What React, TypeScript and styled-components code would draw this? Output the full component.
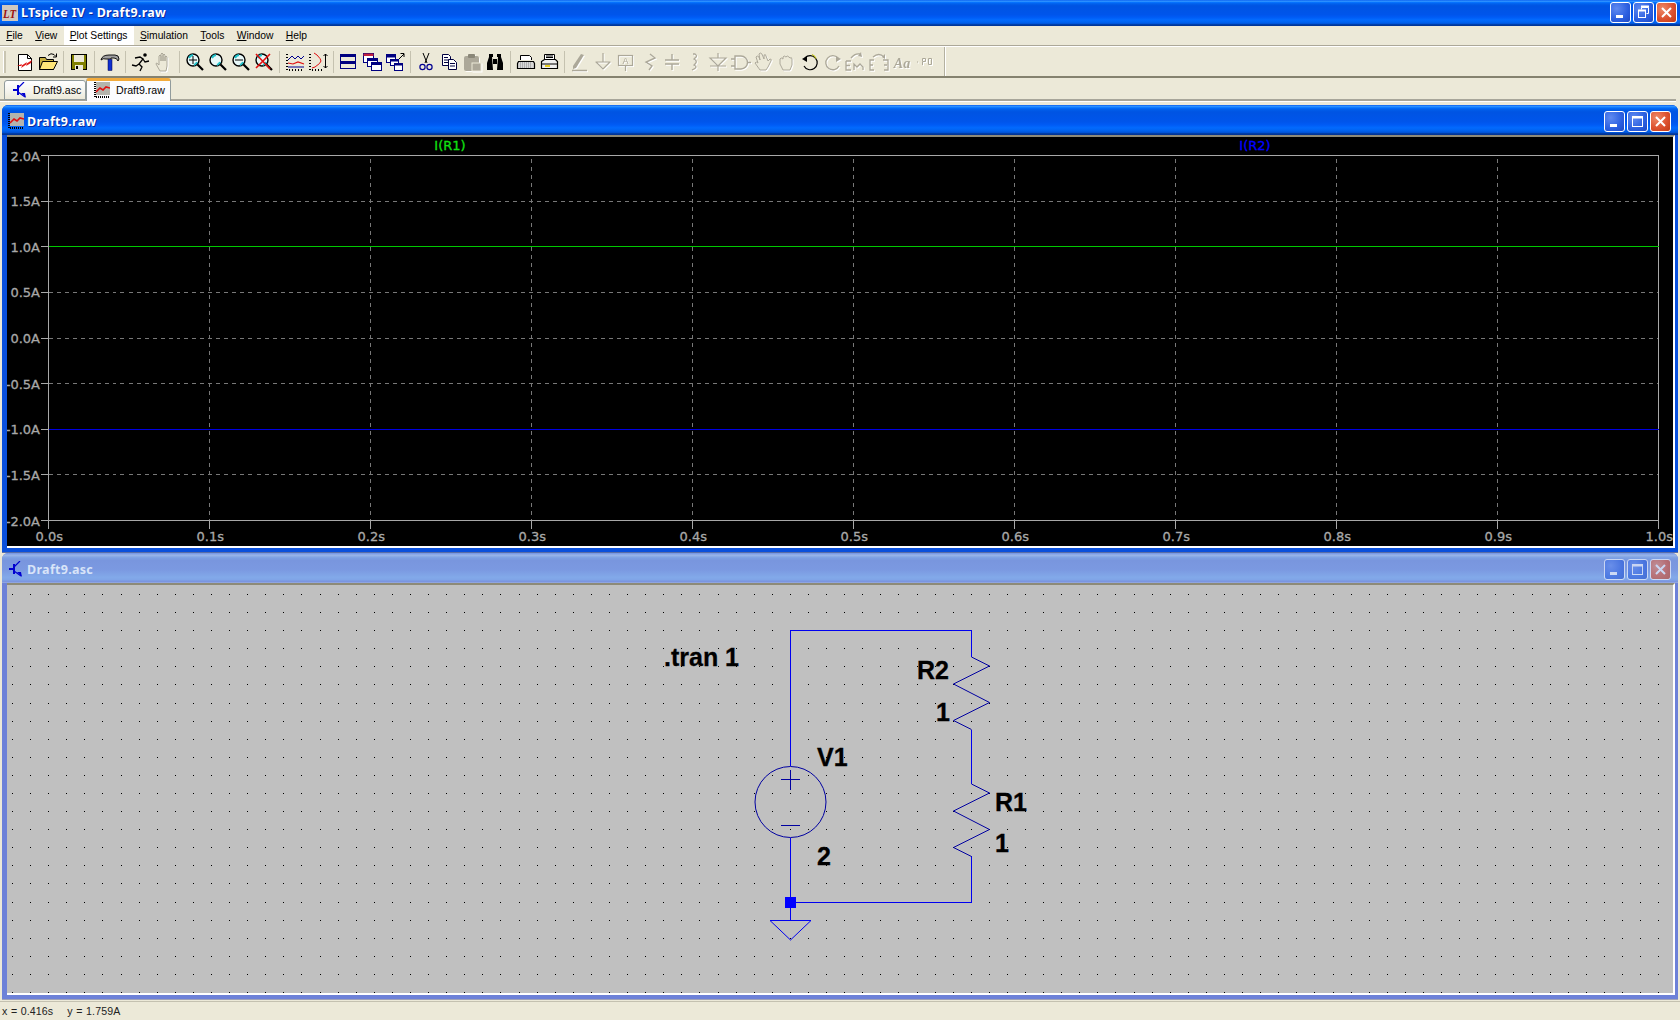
import React from "react";
import styled, { createGlobalStyle } from "styled-components";

const Global = createGlobalStyle`
  html, body {
    margin: 0;
    padding: 0;
    background: #ece9d8;
    overflow: hidden;
  }
`;

const ACTIVE_BAR = `linear-gradient(180deg,#0058ee 0%,#3593ff 4%,#288eff 6%,#127dff 8%,#036ffc 10%,#0262ee 14%,#0057e5 20%,#0054e3 24%,#0055eb 56%,#005bf5 66%,#026afe 76%,#0062ef 86%,#0052d6 92%,#0040ab 94%,#003092 100%)`;
const INACTIVE_BAR = `linear-gradient(180deg,#7697e7 0%,#7e9ee3 3%,#94afe8 6%,#97b4e9 8%,#82a5e4 14%,#7c9fe2 17%,#7996de 25%,#7b99e1 56%,#82a9e9 81%,#80a5e7 89%,#7b96e1 94%,#7a93df 97%,#abbae3 100%)`;

const Desktop = styled.div`
  width: 1680px;
  height: 1020px;
  display: flex;
  flex-direction: column;
  background: #ece9d8;
  font-family: "Liberation Sans", Arial, sans-serif;
  font-size: 10.6px;
  color: #000;
  overflow: hidden;
`;

const TitleBar = styled.div`
  height: 26px;
  flex: none;
  box-sizing: border-box;
  display: flex;
  align-items: center;
  padding: 0 3px 1px 2px;
  background: ${ACTIVE_BAR};
`;

const TitleText = styled.span<{ $inactive?: boolean }>`
  font-family: "Noto Sans", "Liberation Sans", sans-serif;
  font-weight: 700;
  font-size: 12.5px;
  letter-spacing: 0.3px;
  color: ${(p) => (p.$inactive ? "#d8e4f8" : "#fff")};
  text-shadow: ${(p) => (p.$inactive ? "none" : "1px 1px 0 #0a2a9c")};
  white-space: nowrap;
`;

const MainTitle = styled(TitleText)`
  margin-left: 3px;
  flex: 1;
`;

const CaptionGroup = styled.div`
  display: flex;
  gap: 2px;
`;

const CaptionButton = styled.div<{ $close?: boolean; $inactive?: boolean }>`
  width: 21px;
  height: 21px;
  box-sizing: border-box;
  display: flex;
  align-items: center;
  justify-content: center;
  border: 1px solid #fff;
  border-radius: 3px;
  background: ${(p) =>
    p.$close
      ? "radial-gradient(circle at 30% 30%, #ee8a68, #dd5230 55%, #c23a15)"
      : "radial-gradient(circle at 30% 30%, #5f8af0, #2b5fe0 60%, #1f49c4)"};
  opacity: ${(p) => (p.$inactive ? 0.6 : 1)};
`;

const MenuBar = styled.div`
  height: 19px;
  flex: none;
  display: flex;
  background: #ece9d8;
`;

const MenuItem = styled.div<{ $open?: boolean }>`
  padding: 0 6.2px;
  line-height: 19px;
  font-size: 10.3px;
  background: ${(p) => (p.$open ? "#fff" : "transparent")};
  white-space: nowrap;
`;

const Key = styled.span`
  text-decoration: underline;
`;

const ToolBar = styled.div`
  height: 33px;
  flex: none;
  box-sizing: border-box;
  display: flex;
  align-items: center;
  padding: 1px 0 0 3px;
  border-top: 1px solid #aca899;
  box-shadow: inset 0 1px 0 #fff;
  border-bottom: 2px solid #85826f;
`;

const Grip = styled.div`
  width: 2px;
  height: 22px;
  margin-right: 7.5px;
  background: #c9c5b2;
  border-left: 1px solid #fff;
`;

const ToolButton = styled.div`
  width: 23px;
  height: 22px;
  flex: none;
  display: flex;
  align-items: center;
  justify-content: center;
`;

const ToolSep = styled.div`
  width: 8px;
  height: 22px;
  flex: none;
  display: flex;
  justify-content: center;
  &::before {
    content: "";
    width: 1px;
    background: #c5c2b0;
  }
`;

const ToolEnd = styled.div`
  width: 1px;
  height: 29px;
  margin-left: 7px;
  background: #b4b1a0;
  box-shadow: 1px 0 0 #fff;
`;

const Glyph = styled.svg<{ $off?: boolean }>`
  width: 22px;
  height: 22px;
  display: block;
  overflow: visible;
  ${(p) => (p.$off ? "filter: drop-shadow(1px 1px 0 #fff);" : "")}
`;

const TabStrip = styled.div`
  height: 27px;
  flex: none;
  box-sizing: border-box;
  display: flex;
  align-items: flex-end;
  padding: 0 4px 4px 4px;
  position: relative;
  &::after {
    content: "";
    position: absolute;
    left: 0;
    right: 4px;
    bottom: 3px;
    height: 2px;
    background: #a8a69a;
    border-bottom: 1px solid #fff;
  }
`;

const Tab = styled.div<{ $active?: boolean }>`
  position: relative;
  z-index: 1;
  box-sizing: border-box;
  display: flex;
  align-items: center;
  width: ${(p) => (p.$active ? "85px" : "82px")};
  height: ${(p) => (p.$active ? "23px" : "20px")};
  margin-bottom: ${(p) => (p.$active ? "0" : "1px")};
  padding: ${(p) => (p.$active ? "0 0 3px 7px" : "0 0 0 8px")};
  gap: 6px;
  background: ${(p) =>
    p.$active ? "#fcfcfe" : "linear-gradient(180deg,#fff,#f4f3ec 60%,#ece9d8)"};
  border: 1px solid #919b9c;
  border-bottom: ${(p) => (p.$active ? "none" : "1px solid #919b9c")};
  border-top: ${(p) => (p.$active ? "3px solid #f2ab3c" : "1px solid #919b9c")};
  border-radius: 3px 3px 0 0;
  white-space: nowrap;
`;

const Workspace = styled.div`
  flex: 1;
  min-height: 0;
  display: flex;
  flex-direction: column;
  padding: 0 2px;
`;

const ChildWindow = styled.div<{ $inactive?: boolean }>`
  height: ${(p) => (p.$inactive ? "447px" : "448px")};
  flex: none;
  box-sizing: border-box;
  display: flex;
  flex-direction: column;
  padding: 0 3px 4px 5px;
  border-radius: 6px 6px 0 0;
  background: ${(p) => (p.$inactive ? "#6d81d8" : "#0a50dc")};
  border-bottom: 1px solid ${(p) => (p.$inactive ? "#a0a2b8" : "#5a6ea8")};
`;

const ChildBar = styled.div<{ $inactive?: boolean }>`
  height: 30px;
  flex: none;
  box-sizing: border-box;
  margin: 0 -3px 0 -5px;
  display: flex;
  align-items: center;
  padding: 2px 7px 0 6px;
  border-radius: 6px 6px 0 0;
  gap: 3px;
  background: ${(p) => (p.$inactive ? INACTIVE_BAR : ACTIVE_BAR)};
`;

const ChildTitle = styled(TitleText)`
  flex: 1;
`;

const IconSlot = styled.div`
  width: 16px;
  height: 16px;
  flex: none;
  display: flex;
  justify-content: center;
`;

const Pane = styled.div<{ $canvas?: boolean }>`
  flex: 1;
  min-height: 0;
  background: ${(p) => (p.$canvas ? "#c0c0c0" : "#000")};
  border-top: 2px solid #8d8a78;
  border-right: 2px solid #fff;
  border-bottom: 2px solid #fff;
`;

const Drawing = styled.svg`
  display: block;
  width: 100%;
  height: 100%;
`;

const StatusBar = styled.div`
  height: 18px;
  margin-top: 1px;
  flex: none;
  padding-left: 2px;
  line-height: 19px;
  letter-spacing: 0.1px;
  word-spacing: 0.5px;
  white-space: pre;
  color: #222;
  border-top: 1px solid #c4c1b0;
`;

const MENUS = ["File", "View", "Plot Settings", "Simulation", "Tools", "Window", "Help"];

const Mark = ({ children, off }: { children: React.ReactNode; off?: boolean }) => (
  <Glyph viewBox="0 0 22 22" $off={off}>
    {children}
  </Glyph>
);

// plot window icon, also used in the tab
const PlotIcon = () => (
  <svg width="16" height="16" viewBox="0 0 16 16" style={{ flex: "none" }}>
    <rect x="2" y="0" width="14" height="13" fill="#b4b4ac" />
    <path d="M1 0v15h15" fill="none" stroke="#000" strokeDasharray="1 1" strokeWidth="2" />
    <path d="M2 10l4-4 3 2 3-3 4 1" fill="none" stroke="#e01010" strokeWidth="1.6" />
  </svg>
);

const TransistorIcon = () => (
  <svg width="14" height="16" viewBox="0 0 14 16" style={{ flex: "none" }}>
    <path d="M0 8h4M5 3v10" stroke="#0000d0" strokeWidth="2" fill="none" />
    <path d="M5 6l6-6M5 10l7 5" stroke="#0000d0" strokeWidth="1.2" fill="none" />
    <path d="M8 11l5 5-1-5z" fill="#0000d0" />
  </svg>
);

const LtLogo = () => (
  <svg width="16" height="16" viewBox="0 0 16 16" style={{ flex: "none" }}>
    <rect width="16" height="16" fill="#cfc8c0" />
    <text x="1" y="13" fontFamily="Liberation Serif, serif" fontWeight="700" fontStyle="italic" fontSize="13" fill="#9c1010" textLength="13" lengthAdjust="spacingAndGlyphs">
      LT
    </text>
  </svg>
);

const Magnifier = ({ children }: { children?: React.ReactNode }) => (
  <Mark>
    <circle cx="9" cy="9" r="6" fill="#e8f8f8" stroke="#000" strokeWidth="1.4" />
    <path d="M5 7a5 5 0 0 1 4-3M13 11a5 5 0 0 1-3 3" stroke="#20c0c8" strokeWidth="2" fill="none" />
    <path d="M13.5 13.5l5.5 5.5" stroke="#000" strokeWidth="2.2" />
    {children}
  </Mark>
);

const GREY = "#aca899";

const TOOLS: (React.ReactNode | null)[] = [
  <Mark>
    <path d="M4.5 3.5h9l4 4v12h-13z" fill="#fff" stroke="#000" />
    <path d="M13.5 3.5v4h4" fill="none" stroke="#000" />
    <path d="M3 15l5-2-1 2 6-4-1 2 6-4-1 3-5 3 1-2-6 4 1-2z" fill="#e01818" />
  </Mark>,
  <Mark>
    <path d="M2.5 18.5v-12h6l1 2h7v10z" fill="#c8b040" stroke="#000" />
    <path d="M2.5 18.5l3-8h15l-4 8z" fill="#ffe678" stroke="#000" />
    <path d="M11 4.5q3-3 6-1l2 2M19.5 2.5v3.5h-3.5" stroke="#000" fill="none" />
  </Mark>,
  null,
  <Mark>
    <rect x="3.5" y="3.5" width="15" height="15" fill="#808000" stroke="#000" />
    <rect x="6" y="4" width="10" height="7" fill="#ece9d8" />
    <rect x="7" y="14" width="8" height="5" fill="#ece9d8" />
    <rect x="8" y="15" width="2" height="3" fill="#000" />
  </Mark>,
  null,
  <Mark>
    <path d="M2 9q1-5 8-5h6q4 0 4 4l-1 2q-1-3-4-3h-3v1H7q-3-1-5 1z" fill="#a0a0a0" stroke="#000" strokeWidth="0.9" />
    <rect x="9" y="8.5" width="4" height="11" fill="#1030d0" stroke="#000040" strokeWidth="0.5" />
  </Mark>,
  null,
  <Mark>
    <circle cx="15" cy="4" r="1.8" fill="#000" />
    <path d="M5 7l5-1 3 2-4 5 3 3-2 4M9 13l-3 2-4-1M13 8l2 3 4-1" stroke="#000" strokeWidth="1.3" fill="none" />
  </Mark>,
  <Mark off>
    <path d="M7 20l-4-7q0-2 2 0l1 1V5q1-2 2 0v5-7q1-2 2 0v7-6q1-2 2 0v6-4q1-2 2 0v9l-1 5z" fill="#ece9d8" stroke={GREY} />
  </Mark>,
  null,
  <Magnifier>
    <path d="M5 9h8M9 5v8" stroke="#000" />
  </Magnifier>,
  <Magnifier />,
  <Magnifier>
    <path d="M5 9h8" stroke="#000" />
  </Magnifier>,
  <Magnifier>
    <path d="M3 3l14 15M17 3L3 17" stroke="#e01010" strokeWidth="1.6" />
  </Magnifier>,
  null,
  <Mark>
    <path d="M3 3v16h16" stroke="#000" strokeDasharray="1 2" fill="none" strokeWidth="2" />
    <path d="M4 9l4-4 3 3 3-3 3 3 3-3" stroke="#000090" fill="none" />
    <path d="M4 12l5 1 5-2 6 2" stroke="#e01010" fill="none" strokeWidth="1.2" />
    <path d="M4 16h16" stroke="#000090" />
  </Mark>,
  <Mark>
    <path d="M3 3v16h14" stroke="#000" strokeDasharray="1 2" fill="none" strokeWidth="2" />
    <path d="M5 17l3-1q6-4 6-6t-4-6l-3-2" stroke="#e01010" fill="none" />
    <path d="M18.5 3v14M16.5 5l2-2 2 2M16.5 15l2 2 2-2" stroke="#000" fill="none" />
  </Mark>,
  null,
  <Mark>
    <rect x="2.5" y="3.5" width="15" height="14" fill="#ece9d8" stroke="#000080" />
    <rect x="2" y="3" width="16" height="3" fill="#000080" />
    <rect x="2" y="10" width="16" height="3" fill="#000080" />
  </Mark>,
  <Mark>
    <rect x="2.5" y="2.5" width="10" height="9" fill="#fff" stroke="#000080" />
    <rect x="2.5" y="2.5" width="10" height="2.5" fill="#c02040" />
    <rect x="6.5" y="7.5" width="10" height="8" fill="#fff" stroke="#000080" />
    <rect x="6.5" y="7.5" width="10" height="2.5" fill="#000080" />
    <rect x="10.5" y="11.5" width="10" height="8" fill="#fff" stroke="#000080" />
    <rect x="10.5" y="11.5" width="10" height="2.5" fill="#000080" />
  </Mark>,
  <Mark>
    <rect x="2.5" y="3.5" width="9" height="8" fill="#fff" stroke="#000080" />
    <rect x="2.5" y="3.5" width="9" height="3" fill="#000080" />
    <rect x="6.5" y="8.5" width="8" height="6" fill="#fff" stroke="#000080" />
    <rect x="6.5" y="8.5" width="8" height="2" fill="#000080" />
    <rect x="10.5" y="12.5" width="8" height="7" fill="#fff" stroke="#000080" />
    <rect x="10.5" y="12.5" width="8" height="2" fill="#000080" />
    <path d="M15 8l5-5M16.5 2.5h3.5v3.5" stroke="#000" fill="none" />
  </Mark>,
  null,
  <Mark>
    <path d="M8 2l4 10M14 2l-4 10" stroke="#000" />
    <circle cx="7.5" cy="16" r="2.6" fill="none" stroke="#000090" strokeWidth="1.2" />
    <circle cx="14.5" cy="16" r="2.6" fill="none" stroke="#000090" strokeWidth="1.2" />
  </Mark>,
  <Mark>
    <path d="M4.5 3.5h6l2 2v9h-8z" fill="#fff" stroke="#000040" />
    <path d="M6 6.5h4M6 9h5M6 11.5h5" stroke="#000040" />
    <path d="M10.5 8.5h5l3 3v7h-8z" fill="#fff" stroke="#000040" />
    <path d="M12 12.5h5M12 15h5" stroke="#000040" />
  </Mark>,
  <Mark off>
    <rect x="3" y="5" width="15" height="15" rx="2" fill={GREY} />
    <rect x="7" y="3" width="7" height="4" rx="1" fill="#8a8778" />
    <rect x="11" y="12" width="9" height="8" fill={GREY} stroke="#ece9d8" />
  </Mark>,
  <Mark>
    <path d="M3 19v-7l2-6h3l1 13zM19 19v-7l-2-6h-3l-1 13z" fill="#000" />
    <rect x="9" y="8" width="4" height="5" fill="#000" />
    <rect x="5" y="3" width="4" height="3" fill="#000" />
    <rect x="13" y="3" width="4" height="3" fill="#000" />
  </Mark>,
  null,
  <Mark>
    <path d="M5.5 9V4.5h9l2 2V9" fill="#fff" stroke="#000" />
    <path d="M3.5 10.5h15l1 2v5h-17v-5z" fill="#d8d8d8" stroke="#000" strokeWidth="1.2" />
    <path d="M5 12h12M5 14h12M5 16h12" stroke="#888" strokeDasharray="1 1" />
  </Mark>,
  <Mark>
    <path d="M6.5 8V3.5h10V8" fill="#fff" stroke="#000" />
    <path d="M8 5h7M8 6.5h7" stroke="#000" />
    <path d="M3.5 10.5l3-2h11l2 2v7h-16z" fill="#f0f0f0" stroke="#000" strokeWidth="1.2" />
    <path d="M4 13h15" stroke="#000" />
    <rect x="7" y="14" width="5" height="2" fill="#e8d020" />
  </Mark>,
  null,
  <Mark off>
    <path d="M4 18l3-1 8-13-3-1-8 12z" fill={GREY} />
    <path d="M3 19.5h15" stroke={GREY} strokeWidth="1.5" />
  </Mark>,
  <Mark off>
    <path d="M11 2v9M3.5 11h15M4 11l7 7 7-7" stroke={GREY} fill="none" strokeWidth="1.2" />
  </Mark>,
  <Mark off>
    <rect x="3.5" y="4.5" width="14" height="10" stroke={GREY} fill="none" strokeWidth="1.2" />
    <text x="10.5" y="13" textAnchor="middle" fontSize="9" fontFamily="Liberation Sans, sans-serif" fill={GREY}>
      A
    </text>
    <path d="M10.5 15v5" stroke={GREY} strokeWidth="1.2" />
  </Mark>,
  <Mark off>
    <path d="M12 3l5 4-9 4 6 4-3 4" stroke={GREY} fill="none" strokeWidth="1.4" />
  </Mark>,
  <Mark off>
    <path d="M11 3v6M4 9h14M4 13h14M11 13v6" stroke={GREY} fill="none" strokeWidth="1.4" />
  </Mark>,
  <Mark off>
    <path d="M9 3h2q3 2 0 4l-1 1q4 2 1 5l-1 1q4 2 0 4l-2 1" stroke={GREY} fill="none" strokeWidth="1.3" />
  </Mark>,
  <Mark off>
    <path d="M11 2v5M11 15v5M3 7h16l-8 8zM3 15h16" stroke={GREY} fill="none" strokeWidth="1.2" />
  </Mark>,
  <Mark off>
    <path d="M1 8h4M1 15h4M5 5h6a6 6 0 0 1 0 13H5zM17 11.5h4" stroke={GREY} fill="none" strokeWidth="1.4" />
  </Mark>,
  <Mark off>
    <path d="M7 19l-5-7q1-2 3 0l-2-6q1-2 3 0l1 3-1-6q1-2 3 0l2 5V4q2-1 2 1l2 5 2-2q2 0 1 2l-3 6-2 3z" fill="#ece9d8" stroke={GREY} />
  </Mark>,
  <Mark off>
    <path d="M7 19l-3-6V8q1-2 3 0V6q1-2 3 0 1-2 3 0l1 1q2-1 2 1v6l-2 5z" fill="#ece9d8" stroke={GREY} />
  </Mark>,
  <Mark>
    <path d="M6 7a7 7 0 1 1 -1 8" fill="none" stroke="#000" strokeWidth="1.2" />
    <path d="M13 3.5a7 7 0 0 1 4 4" fill="none" stroke="#c0c020" strokeWidth="1.2" />
    <path d="M3 8l5-3v6z" fill="#000" />
  </Mark>,
  <Mark off>
    <path d="M16 7a7 7 0 1 0 1 8" fill="none" stroke={GREY} strokeWidth="1.3" />
    <path d="M19 8l-5-3v6z" fill={GREY} />
  </Mark>,
  <Mark off>
    <path d="M1 10h5M1 10v9h5M1 14.5h4M9 19v-6l3 3 3-3 3 3v3M6 7q4-5 9-4" stroke={GREY} fill="none" strokeWidth="1.3" />
    <path d="M17 6l-4-1 3-4z" fill={GREY} />
  </Mark>,
  <Mark off>
    <path d="M6 9H2v10h4M2 14h3M15 9h5v10h-4M19 14h-3M5 6q6-5 11 0" stroke={GREY} fill="none" strokeWidth="1.3" />
    <path d="M17 8l-3-2 3-3z" fill={GREY} />
  </Mark>,
  <Mark off>
    <text x="11" y="17" textAnchor="middle" fontSize="14" fontStyle="italic" fontWeight="700" fontFamily="Liberation Serif, serif" fill={GREY}>
      Aa
    </text>
  </Mark>,
  <Mark off>
    <path d="M3 11h1M8.5 7.5h3v3h-3zM14.5 7.5h3v6h-3zM8.5 11v3" stroke={GREY} fill="none" />
  </Mark>,
];

const CaptionIcon = ({ kind }: { kind: "min" | "max" | "restore" | "close" }) => (
  <svg width="15" height="15" viewBox="0 0 15 15">
    {kind === "min" && <rect x="3" y="10" width="7" height="3" fill="#fff" />}
    {kind === "max" && (
      <>
        <rect x="2.5" y="2.5" width="10" height="10" fill="none" stroke="#fff" />
        <rect x="2" y="2" width="11" height="2.5" fill="#fff" />
      </>
    )}
    {kind === "restore" && (
      <>
        <path d="M5.5 4.5v-2h7v6h-2" fill="none" stroke="#fff" />
        <path d="M5 1.5h8" stroke="#fff" strokeWidth="2" />
        <rect x="2.5" y="5.5" width="7" height="7" fill="none" stroke="#fff" />
        <path d="M2 5.5h8" stroke="#fff" strokeWidth="2" />
      </>
    )}
    {kind === "close" && <path d="M3 3l9 9M12 3l-9 9" stroke="#fff" strokeWidth="2" />}
  </svg>
);

const Captions = ({ restore, inactive }: { restore?: boolean; inactive?: boolean }) => (
  <CaptionGroup>
    <CaptionButton $inactive={inactive}>
      <CaptionIcon kind="min" />
    </CaptionButton>
    <CaptionButton $inactive={inactive}>
      <CaptionIcon kind={restore ? "restore" : "max"} />
    </CaptionButton>
    <CaptionButton $close $inactive={inactive}>
      <CaptionIcon kind="close" />
    </CaptionButton>
  </CaptionGroup>
);

const PLOT_LEFT = 41.5;
const PLOT_RIGHT = 1651.5;
const PLOT_TOP = 18.5;
const PLOT_BOTTOM = 383.5;
const AXIS = "#a8a8a8";
const plotFont = {
  fontFamily: "DejaVu Sans, sans-serif",
  fontSize: 13,
  fill: AXIS,
  stroke: AXIS,
  strokeWidth: 0.3,
};

const Plot = () => {
  const xs = Array.from({ length: 11 }, (_, i) => PLOT_LEFT + (i * (PLOT_RIGHT - PLOT_LEFT)) / 10);
  const ys = Array.from({ length: 9 }, (_, i) => PLOT_TOP + (i * (PLOT_BOTTOM - PLOT_TOP)) / 8);
  const yLabels = ["2.0A", "1.5A", "1.0A", "0.5A", "0.0A", "-0.5A", "-1.0A", "-1.5A", "-2.0A"];
  return (
    <Drawing viewBox="0 0 1666 409">
      <g shapeRendering="crispEdges">
        {xs.slice(1, 10).map((x) => (
          <path key={x} d={`M${x} ${PLOT_TOP}V${PLOT_BOTTOM}`} stroke="#787878" strokeDasharray="4 4" strokeDashoffset="-3" />
        ))}
        {ys.slice(1, 8).map((y) => (
          <path key={y} d={`M${PLOT_LEFT} ${y}H${PLOT_RIGHT}`} stroke="#787878" strokeDasharray="4 4" />
        ))}
        <rect x={PLOT_LEFT} y={PLOT_TOP} width={PLOT_RIGHT - PLOT_LEFT} height={PLOT_BOTTOM - PLOT_TOP} fill="none" stroke={AXIS} />
        {ys.map((y) => (
          <path key={y} d={`M${PLOT_LEFT - 8} ${y}H${PLOT_LEFT}`} stroke={AXIS} />
        ))}
        {xs.map((x) => (
          <path key={x} d={`M${x} ${PLOT_BOTTOM}v8`} stroke={AXIS} />
        ))}
        <path d={`M${PLOT_LEFT} ${ys[2]}H${PLOT_RIGHT}`} stroke="#00c800" />
        <path d={`M${PLOT_LEFT} ${ys[6]}H${PLOT_RIGHT}`} stroke="#0000e0" />
      </g>
      {ys.map((y, i) => (
        <text key={y} x={33} y={y + 5} textAnchor="end" {...plotFont}>
          {yLabels[i]}
        </text>
      ))}
      {xs.map((x, i) => (
        <text key={x} x={x - 13} y={404} {...plotFont}>
          {(i / 10).toFixed(1)}s
        </text>
      ))}
      <text x={443} y={13} textAnchor="middle" {...plotFont} fill="#10e010" stroke="#10e010">
        I(R1)
      </text>
      <text x={1248} y={13} textAnchor="middle" {...plotFont} fill="#0000ff" stroke="#0000ff">
        I(R2)
      </text>
    </Drawing>
  );
};

const dotGrid = () => {
  let d = "";
  for (let r = 0; r < 23; r++) {
    for (let c = 0; c < 92; c++) {
      d += `M${Math.round(5 + c * 18.09)} ${Math.round(10 + r * 18.09)}h1v1h-1z`;
    }
  }
  return d;
};

// the schematic, in pane coordinates (page x - 7, page y - 584)
const zig = (x: number, y: number) =>
  `M${x} ${y}l18 9-36 18 36 18.5-36 18 18 9`;

const schematicText = {
  fontFamily: "Liberation Sans, Arial, sans-serif",
  fontSize: 25,
  fontWeight: 700,
  fill: "#000",
  stroke: "#000",
  strokeWidth: 0.3,
};

const Schematic = () => (
  <Drawing viewBox="0 1 1666 408">
    <path d={dotGrid()} fill="#000" shapeRendering="crispEdges" />
    <g fill="none" stroke="#0000f0" shapeRendering="crispEdges">
      <path d="M783.5 182V46.5H964.5V73" />
      <path d="M964.5 146V200" />
      <path d="M964.5 272V318.5H783.5" />
      <path d="M783.5 254V336" />
    </g>
    <g fill="none" stroke="#0000a0">
      <path d={zig(964.5, 73)} />
      <path d={zig(964.5, 200)} />
      <circle cx="783.5" cy="218" r="35.5" />
      <path d="M774 195.5h19M783.5 186v20M774 241.5h19" />
    </g>
    <path d="M763 336.5h41L783.5 356z" fill="none" stroke="#0000f0" />
    <rect x="778" y="313" width="11" height="11" fill="#0000ff" />
    <text x="657" y="82" {...schematicText}>.tran 1</text>
    <text x="910" y="95" {...schematicText}>R2</text>
    <text x="929" y="137" {...schematicText}>1</text>
    <text x="810" y="182" {...schematicText}>V1</text>
    <text x="810" y="281" {...schematicText}>2</text>
    <text x="988" y="227" {...schematicText}>R1</text>
    <text x="988" y="268" {...schematicText}>1</text>
  </Drawing>
);

export default function App() {
  return (
    <>
      <Global />
      <Desktop>
        <TitleBar>
          <LtLogo />
          <MainTitle>LTspice IV - Draft9.raw</MainTitle>
          <Captions restore />
        </TitleBar>
        <MenuBar>
          {MENUS.map((m) => (
            <MenuItem key={m} $open={m === "Plot Settings"}>
              <Key>{m[0]}</Key>
              {m.slice(1)}
            </MenuItem>
          ))}
        </MenuBar>
        <ToolBar>
          <Grip />
          {TOOLS.map((t, i) => (t === null ? <ToolSep key={i} /> : <ToolButton key={i}>{t}</ToolButton>))}
          <ToolEnd />
        </ToolBar>
        <TabStrip>
          <Tab>
            <TransistorIcon />
            Draft9.asc
          </Tab>
          <Tab $active>
            <PlotIcon />
            Draft9.raw
          </Tab>
        </TabStrip>
        <Workspace>
          <ChildWindow>
            <ChildBar>
              <IconSlot>
                <PlotIcon />
              </IconSlot>
              <ChildTitle>Draft9.raw</ChildTitle>
              <Captions />
            </ChildBar>
            <Pane>
              <Plot />
            </Pane>
          </ChildWindow>
          <ChildWindow $inactive>
            <ChildBar $inactive>
              <IconSlot>
                <TransistorIcon />
              </IconSlot>
              <ChildTitle $inactive>Draft9.asc</ChildTitle>
              <Captions inactive />
            </ChildBar>
            <Pane $canvas>
              <Schematic />
            </Pane>
          </ChildWindow>
        </Workspace>
        <StatusBar>{"x = 0.416s    y = 1.759A"}</StatusBar>
      </Desktop>
    </>
  );
}
